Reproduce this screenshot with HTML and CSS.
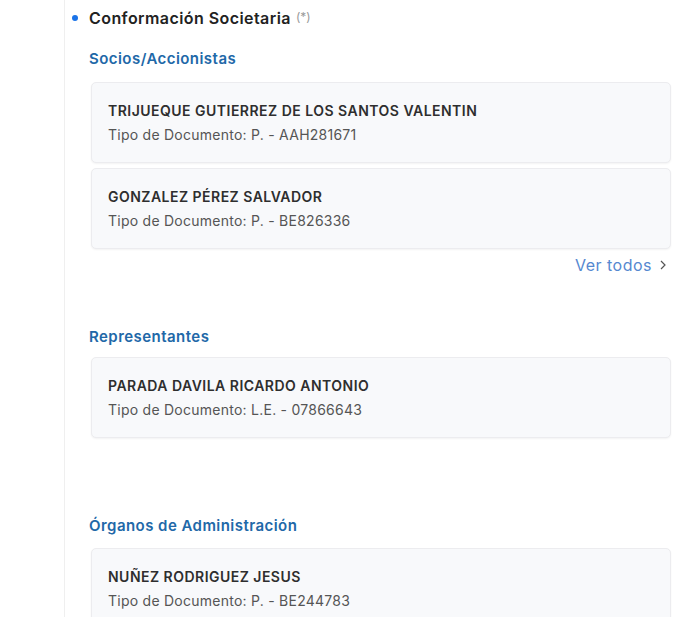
FILE: index.html
```html
<!DOCTYPE html>
<html lang="es">
<head>
    <meta charset="UTF-8">
    <title>Conformación Societaria</title>
    <link rel="stylesheet" href="styles.css">
</head>
<body>
<div class="panel">
    <div class="panel-title">
        <span class="dot"></span>
        <h2>Conformación Societaria</h2>
        <span class="req">(*)</span>
    </div>

    <div class="group">
        <h3>Socios/Accionistas</h3>
        <ul class="card-list">
            <li class="card">
                <p class="card-name">TRIJUEQUE GUTIERREZ DE LOS SANTOS VALENTIN</p>
                <p class="card-doc">Tipo de Documento: P. - AAH281671</p>
            </li>
            <li class="card">
                <p class="card-name">GONZALEZ PÉREZ SALVADOR</p>
                <p class="card-doc">Tipo de Documento: P. - BE826336</p>
            </li>
        </ul>
        <div class="more">
            <a href="#">Ver todos
                <svg width="10" height="12" viewBox="0 0 10 12"><path d="M3 2 L7 6 L3 10" fill="none" stroke="#555" stroke-width="1.2"/></svg>
            </a>
        </div>
    </div>

    <div class="group group-rep">
        <h3>Representantes</h3>
        <ul class="card-list">
            <li class="card">
                <p class="card-name">PARADA DAVILA RICARDO ANTONIO</p>
                <p class="card-doc">Tipo de Documento: L.E. - 07866643</p>
            </li>
        </ul>
    </div>

    <div class="group group-org">
        <h3>Órganos de Administración</h3>
        <ul class="card-list">
            <li class="card">
                <p class="card-name">NUÑEZ RODRIGUEZ JESUS</p>
                <p class="card-doc">Tipo de Documento: P. - BE244783</p>
            </li>
        </ul>
    </div>
</div>
</body>
</html>
```

FILE: styles.css
```css
*{
    padding: 0;
    margin: 0;
    box-sizing: border-box;
}
ul{
    list-style-type: none;
}
body{
    background-color: #ffffff;
    font-family: "Inter", "Liberation Sans", sans-serif;
    color: #2b2b2b;
    height: 617px;
    overflow: hidden;
}
.panel{
    margin-left: 64px;
    border-left: 1px solid #efefef;
    padding: 7px 10px 0 24px;
    min-height: 617px;
}
.panel-title{
    display: flex;
    align-items: center;
    margin-left: -17px;
    height: 22px;
}
.dot{
    width: 6px;
    height: 6px;
    border-radius: 50%;
    background-color: #1a73e8;
    margin-right: 11px;
}
.panel-title h2{
    font-size: 16px;
    font-weight: 600;
    letter-spacing: 0.43px;
    color: #222222;
}
.req{
    font-size: 12px;
    color: #9a9a9a;
    margin-left: 5px;
    position: relative;
    top: -2px;
}
.group h3{
    font-size: 15px;
    font-weight: 600;
    letter-spacing: 0.45px;
    color: #2168a8;
    line-height: 20px;
    margin-top: 20px;
}
.card-list{
    margin-top: 13px;
    padding-left: 2px;
}
.card{
    height: 81px;
    padding: 18px 16px 0 16px;
    background-color: #f8f9fb;
    border: 1px solid #ececef;
    border-radius: 5px;
    box-shadow: 0 1px 2px rgba(0, 0, 0, 0.05);
    margin-bottom: 5px;
}
.card-name{
    font-size: 14px;
    font-weight: 600;
    letter-spacing: 0.48px;
    line-height: 20px;
    color: #2e2e2e;
}
.card-doc{
    font-size: 14px;
    letter-spacing: 0.25px;
    line-height: 24px;
    margin-top: 2px;
    color: #555555;
}
.more{
    display: flex;
    justify-content: flex-end;
    padding-right: 3px;
}
.more a{
    display: flex;
    align-items: center;
    gap: 6px;
    font-size: 16px;
    letter-spacing: 0.5px;
    line-height: 22px;
    color: #5588d0;
    text-decoration: none;
}
.group-rep h3{
    margin-top: 51px;
}
.group-rep .card-list{
    margin-top: 10px;
}
.group-org h3{
    margin-top: 78px;
}
.group-org .card-list{
    margin-top: 12px;
}
```
